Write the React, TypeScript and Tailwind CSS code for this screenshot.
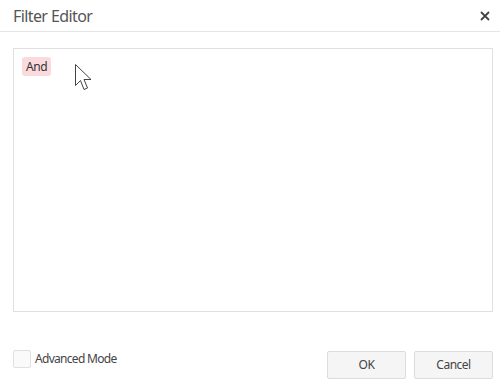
import React from "react";

export default function App() {
  return (
    <div className="w-[500px] h-[384px] bg-white flex flex-col text-[#333]" style={{ fontFamily: '"Noto Sans", "Open Sans", sans-serif' }}>
      <div className="h-[32px] border-b border-[#e5e5e5] flex items-center justify-between pl-[13px] pr-[8px] shrink-0">
        <span className="text-[16px] text-[#555] leading-none tracking-[-0.6px]">Filter Editor</span>
        <svg width="12" height="12" viewBox="0 0 12 12" className="mr-[1px]">
          <path d="M2 2 L10 10 M10 2 L2 10" stroke="#444" strokeWidth="1.8" />
        </svg>
      </div>
      <div className="px-[13px] pt-[16px] pr-[7px]">
        <div className="relative h-[264px] border border-[#e0e0e0] pl-[8px] pt-[8px]">
          <div className="flex">
            <span className="flex items-center justify-center h-[19px] px-[4px] rounded-[3px] bg-[#fadadd] text-[12px] text-[#333] leading-none tracking-[-0.4px]">And</span>
          </div>
          <svg className="absolute left-[60px] top-[14px]" width="22" height="30" viewBox="0 0 22 30">
            <path d="M1.5 1.5 L1.5 22.5 L6.5 17.5 L10 26.5 L13.5 25 L10 16.5 L17 16.5 Z" fill="white" stroke="#444" strokeWidth="1" strokeLinejoin="miter" />
          </svg>
        </div>
      </div>
      <div className="flex items-start justify-between px-[13px] pr-[7px] mt-[39px]">
        <label className="flex items-center gap-[4px] mt-[-1px]">
          <span className="w-[18px] h-[18px] border border-[#e0e0e0] bg-[#fafafa] rounded-[2px]" />
          <span className="text-[12px] text-[#444] tracking-[-0.7px]">Advanced Mode</span>
        </label>
        <div className="flex gap-[8px]">
          <button className="w-[79px] h-[28px] border border-[#dcdcdc] bg-[#f5f5f5] rounded-[2px] text-[12px] text-[#444] tracking-[-0.5px]">OK</button>
          <button className="w-[79px] h-[28px] border border-[#dcdcdc] bg-[#f5f5f5] rounded-[2px] text-[12px] text-[#444] tracking-[-0.5px]">Cancel</button>
        </div>
      </div>
    </div>
  );
}
